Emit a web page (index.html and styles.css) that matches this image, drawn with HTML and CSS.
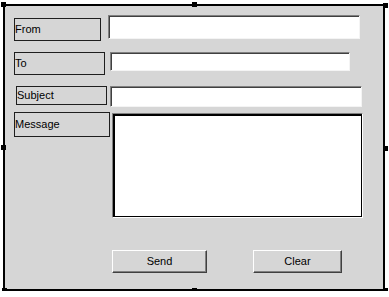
FILE: index.html
```html
<!DOCTYPE html>
<html>
<head>
<meta charset="utf-8">
<link rel="stylesheet" href="styles.css">
</head>
<body>
<div class="frame">
  <div class="row row-from">
    <div class="label lbl-from">From</div>
    <div class="field fld-from"></div>
  </div>
  <div class="row row-to">
    <div class="label lbl-to">To</div>
    <div class="field fld-to"></div>
  </div>
  <div class="row row-subject">
    <div class="label lbl-subject">Subject</div>
    <div class="field fld-subject"></div>
  </div>
  <div class="row row-message">
    <div class="label lbl-message">Message</div>
    <div class="memo"></div>
  </div>
  <div class="row row-buttons">
    <div class="btn btn-send">Send</div>
    <div class="btn btn-clear">Clear</div>
  </div>
  <span class="handle h-tl"></span>
  <span class="handle h-tm"></span>
  <span class="handle h-tr"></span>
  <span class="handle h-lm"></span>
  <span class="handle h-rm"></span>
  <span class="handle h-bl"></span>
  <span class="handle h-bm"></span>
  <span class="handle h-br"></span>
</div>
</body>
</html>
```
FILE: styles.css
```css
html, body {
  margin: 0;
  padding: 0;
  background: #ffffff;
}
body {
  font-family: "Liberation Sans", Arial, sans-serif;
  font-size: 11px;
  color: #000;
}
.frame {
  position: relative;
  box-sizing: border-box;
  margin: 4px 0 0 3px;
  width: 382px;
  height: 287px;
  border: 2px solid #000;
  background: #d6d6d6;
  padding-top: 9px;
  display: flex;
  flex-direction: column;
}
.row {
  display: flex;
  align-items: flex-start;
}
.row-to { margin-top: 11px; }
.row-subject { margin-top: 11px; }
.row-message { margin-top: 5px; }
.row-buttons { margin-top: 32px; }

.label {
  box-sizing: border-box;
  border: 1px solid #1e1e1e;
  display: flex;
  align-items: center;
  padding-left: 0;
  line-height: 1;
}
.lbl-from { margin: 3px 0 0 9px; width: 87px; height: 23px; }
.lbl-to { margin-left: 9px; width: 91px; height: 23px; }
.lbl-subject { margin-left: 11px; width: 91px; height: 19px; }
.lbl-message { margin-left: 9px; width: 96px; height: 25px; }

.field {
  box-sizing: border-box;
  background: #fff;
  border-top: 1px solid #808080;
  border-left: 1px solid #808080;
  border-right: 1px solid #f4f4f4;
  border-bottom: 1px solid #f4f4f4;
  box-shadow: inset 1px 1px 0 #404040;
}
.fld-from { margin-left: 7px; width: 252px; height: 24px; }
.fld-to { margin-left: 5px; width: 240px; height: 19px; }
.fld-subject { margin-left: 3px; width: 252px; height: 21px; }

.memo {
  box-sizing: border-box;
  margin: 1px 0 0 2px;
  width: 251px;
  height: 105px;
  background: #fff;
  border-top: 1px solid #808080;
  border-left: 1px solid #808080;
  border-right: 1px solid #fff;
  border-bottom: 1px solid #fff;
  box-shadow: inset 0 0 0 1px #000, inset 1px 1px 0 1px #000;
}

.btn {
  box-sizing: border-box;
  height: 23px;
  background: #d6d6d6;
  border-top: 1px solid #fff;
  border-left: 1px solid #fff;
  border-right: 1px solid #404040;
  border-bottom: 1px solid #404040;
  box-shadow: inset -1px -1px 0 #808080;
  display: flex;
  align-items: center;
  justify-content: center;
  line-height: 1;
}
.btn-send { margin-left: 107px; width: 95px; }
.btn-clear { margin-left: 46px; width: 89px; }

.handle {
  position: absolute;
  width: 5px;
  height: 5px;
  background: #000;
}
.h-tl { left: -4px; top: -4px; }
.h-tm { left: 187px; top: -4px; }
.h-tr { left: 378px; top: -3px; }
.h-lm { left: -4px; top: 139px; }
.h-rm { left: 378px; top: 140px; }
.h-bl { left: -3px; top: 282px; }
.h-bm { left: 187px; top: 282px; }
.h-br { left: 378px; top: 282px; }
```
